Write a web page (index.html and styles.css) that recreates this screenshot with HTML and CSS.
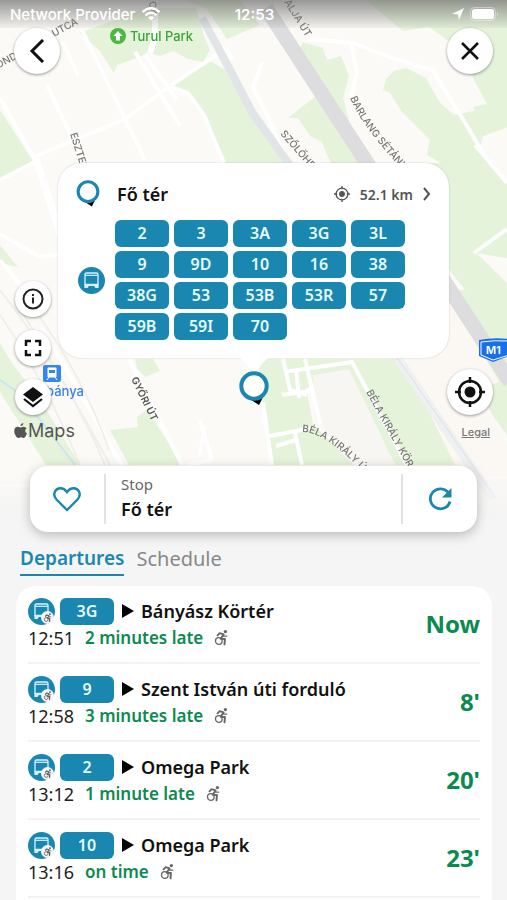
FILE: index.html
```html
<!DOCTYPE html>
<html lang="hu">

<head>
    <meta charset="UTF-8">
    <meta name="viewport" content="width=device-width, initial-scale=1.0">
    <title>Fő tér</title>
    <link rel="stylesheet" href="styles.css">
</head>

<body>
    <!-- shared icons -->
    <svg class="sprite" aria-hidden="true">
        <symbol id="bus" viewBox="0 0 27 27">
            <circle cx="13.5" cy="13.5" r="13.5" fill="#1a87b0" />
            <path d="M7 7.5Q7 6 8.500 6h10Q20 6 20 7.500V17.500H7z" fill="none" stroke="#d9f1fa" stroke-width="1.300" />
            <path d="M7 8.300h13" stroke="#d9f1fa" stroke-width="1.200" />
            <path d="M6.400 17h14.200v4h-3.200l-1.200-2h-5.400l-1.200 2H6.400z" fill="#d9f1fa" />
        </symbol>
        <symbol id="wheelchair" viewBox="0 0 16 18">
            <circle cx="13" cy="2.200" r="1.900" fill="currentColor" />
            <path d="M4 6.500L6.500 4l4.500 1.500-3.500 5 5 .300-.500 6" fill="none" stroke="currentColor" stroke-width="2.200" stroke-linejoin="round" stroke-linecap="round" />
            <path d="M11 7.500h3.500" fill="none" stroke="currentColor" stroke-width="1.500" stroke-linecap="round" />
            <circle cx="5.500" cy="13" r="3.800" fill="none" stroke="currentColor" stroke-width="1.500" />
        </symbol>
        <symbol id="bus-access" viewBox="0 0 27 27">
            <use href="#bus" />
            <circle cx="19.500" cy="19.500" r="6.500" fill="#f4f4f4" />
            <use href="#wheelchair" x="15.500" y="15" width="8" height="9" color="#555" />
        </symbol>
        <symbol id="pin" viewBox="0 0 30 36">
            <path d="M9 27l11 7 6-12z" fill="#000" />
            <circle cx="15" cy="15" r="12.700" fill="#fff" stroke="#1a87b0" stroke-width="4" />
        </symbol>
        <symbol id="target" viewBox="0 0 30 30">
            <circle cx="15" cy="15" r="11" fill="none" stroke="currentColor" stroke-width="2.500" />
            <circle cx="15" cy="15" r="5.500" fill="currentColor" />
            <path d="M15 0v6M15 24v6M0 15h6M24 15h6" stroke="currentColor" stroke-width="2.500" />
        </symbol>
    </svg>

    <main class="screen">
        <section class="map">
            <svg class="map-canvas" viewBox="0 0 507 520" preserveAspectRatio="xMidYMin slice" aria-hidden="true">
                <rect width="507" height="520" fill="#fbfaf6" />
                <g fill="#e5f3da">
                    <path d="M80 33L146 8h50l8 28 6 14-7 12-15-3-15-8-13 5-13-4-5 4-25 9-3 8-14-22z" />
                    <path d="M185 0h55l20 25-33 14-20-30z" />
                    <path d="M168 85l42-24 18 10 65 92h-68l-20-47-16-23z" />
                    <path d="M303 42l20 6 4 12 14-4 8 20-6 22 8 30 22 35h-15L300 48z" />
                    <path d="M366 0h141v112l-28 5-6-10 14-3-31-58-27-19-26 4z" />
                    <path d="M386 79l8-8 12-3 20 10 14 25 14 12 34-7 29-4v20l-34 12-4 15 12 14h-46l-18-10 3-15-28-28-12-19-7-3z" />
                    <path d="M288 118l28-22 53 70h-37l-10-24-12-6-12-18z" />
                    <path d="M0 110l34 53-34 18z" />
                    <path d="M0 245l18 22-18-4z" />
                    <path d="M430 163h24l53 75v20l-31-5 31 30v60l-60-76z" />
                    <path d="M452 163h35l20 20v55l-31 16z" />
                    <path d="M449 290h58v145l-12-16-18-30z" />
                    <path d="M0 343l12 20 30 40 38 62H46L0 392z" />
                    <path d="M135 359h18l7 12-15 6-8-9z" />
                    <path d="M110 430l28-3-1-10 10-7 36 55h-54z" />
                    <path d="M262 359h136l68 106h-70l-50-82-40 5 7 36 41 41H272l-5-40-12-40z" />
                </g>
                <path d="M449 290l50 92-22 8 35 65v65h-30L405 363z" fill="#fbf8f4" />
                <path d="M313 375l36-6 46 96h-36l-44-46z" fill="#f8f6f2" />
                <!-- streets -->
                <g fill="none" stroke="#fff" stroke-width="4">
                    <path d="M36 156L125 119l45-33 55-37 8 10M82 30l63 130M47 85l32 68M63 42l15 34M0 98l35 62 30 95M135 52l45 74M145 55l32 45M168 86l20 7 16 22 20 48" />
                    <path d="M307 39l46 4 45 17 35 10 9 16 22 35 22 37M351 44l6 28-6 25M262 62l-9 25 20 40 14 36" />
                    <path d="M0 180l38-20 30 92-28 5-40-23M474 253l33-24M0 260l40 50M475 145l32 38" />
                    <path d="M129 359l53 106M42 328l80 137M200 420l12 40-25 5M205 425l-5 30" />
                    <path d="M283 359l7 31 17 5M305 359l15 65M284 372l68-10 55 103M296 370l3 28M282 395l28-4M263 402l9 63M270 436l42-8M295 433l7 32M276 446l20-6" />
                </g>
                <path d="M155 0v38l-5 15" stroke="#fff" stroke-width="6" fill="none" />
                <path d="M202 18q20 36 51 96l36 50" fill="none" stroke="#e2e5e7" stroke-width="8" />
                <path d="M398 359l95 140" fill="none" stroke="#eef0f1" stroke-width="9" />
                <path d="M391 349l105 150" fill="none" stroke="#dde1e4" stroke-width="1" />
                <path d="M266 8L510 382" fill="none" stroke="#dddddf" stroke-width="15" />
                <path d="M0 380l20 14 55 71" fill="none" stroke="#c8e7f5" stroke-width="2" />
                <g fill="none" stroke="#f2efea" stroke-width="2">
                    <path d="M0 315q45 65 80 150M18 305q60 100 92 160M35 310q50 70 74 140M0 290q70 90 105 175" />
                </g>
                <!-- street names -->
                <g class="street">
                    <text transform="translate(-10 73) rotate(-28)">MOND</text>
                    <text transform="translate(54 37) rotate(-28)">UTCA</text>
                    <text transform="translate(143 -10) rotate(68)">UTCA</text>
                    <text transform="translate(284 2) rotate(58)">ALJA ÚT</text>
                    <text transform="translate(70 134) rotate(72)">ESZTERG</text>
                    <text transform="translate(280 134) rotate(49)">SZŐLŐHEGY</text>
                    <text transform="translate(131 379) rotate(64)" class="street-main">GYŐRI ÚT</text>
                    <path id="barlang" d="M350 98q14 33 66 86" fill="none" />
                    <text><textPath href="#barlang">BARLANG SÉTÁNY</textPath></text>
                    <path id="bela" d="M302 432q24 0 64 43" fill="none" />
                    <text><textPath href="#bela">BÉLA KIRÁLY Ú</textPath></text>
                    <text transform="translate(366 392) rotate(61)">BÉLA KIRÁLY KÖR</text>
                </g>
                <!-- points of interest -->
                <circle cx="118" cy="36" r="8" fill="#4ab840" />
                <path d="M118 31l4.500 5H120v4.500h-4V36h-2.500z" fill="#fff" />
                <text x="130" y="41" class="poi poi-park">Turul Park</text>
                <rect x="43" y="365" width="18" height="17" rx="2" fill="#3587ee" />
                <path d="M48 368h8v9h-8zM49 377l-2 3M55 377l2 3" fill="#fff" stroke="#fff" stroke-width="1" />
                <path d="M49 370h6v3h-6z" fill="#3587ee" />
                <text x="46" y="396" class="poi poi-station">bánya</text>
                <path d="M479 340q15-3 30-1v17l-16 6-14-6z" fill="#1670ee" />
                <path d="M481 342q13-2 28-1v14l-16 5-12-5z" fill="none" stroke="#fff" stroke-width="1" />
                <text x="486" y="354" class="shield">M1</text>
            </svg>

            <header class="status-bar">
                <div class="carrier">
                    <span>Network Provider</span>
                    <svg width="20" height="14" viewBox="0 0 20 14" aria-hidden="true">
                        <path d="M1.500 5q8.500-7.500 17 0M4.500 8.300q5.500-5 11 0" fill="none" stroke="#fff" stroke-width="2.500" />
                        <path d="M10 13.500L7 10.500q3-2.500 6 0z" fill="#fff" />
                    </svg>
                </div>
                <time>12:53</time>
                <div class="indicators">
                    <svg width="12" height="12" viewBox="0 0 12 12" aria-hidden="true">
                        <path d="M0 6L12 0 7 12 6 6.500z" fill="#fff" />
                    </svg>
                    <svg width="29" height="14" viewBox="0 0 29 14" aria-hidden="true">
                        <rect x=".500" y=".500" width="25" height="13" rx="4" fill="none" stroke="#fff" stroke-opacity=".4" />
                        <rect x="2" y="2" width="22" height="10" rx="2.500" fill="#fff" />
                        <path d="M27 5v4q2-2 0-4z" fill="#fff" fill-opacity=".5" />
                    </svg>
                </div>
            </header>

            <nav class="top-nav">
                <button class="round" aria-label="Back">
                    <svg width="16" height="24" viewBox="0 0 16 24"><path d="M14 1L3 12l11 11" fill="none" stroke="#111" stroke-width="3" /></svg>
                </button>
                <button class="round" aria-label="Close">
                    <svg width="18" height="18" viewBox="0 0 18 18"><path d="M1 1l16 16M17 1L1 17" stroke="#111" stroke-width="2.500" /></svg>
                </button>
            </nav>

            <article class="callout">
                <header class="callout-head">
                    <svg width="24" height="28"><use href="#pin" /></svg>
                    <h2>Fő tér</h2>
                    <a class="distance" href="#stop">
                        <svg width="16" height="16"><use href="#target" /></svg>
                        52.1 km
                        <svg width="8" height="14" viewBox="0 0 8 14"><path d="M1 1l5 6-5 6" fill="none" stroke="#555" stroke-width="2" /></svg>
                    </a>
                </header>
                <div class="callout-body">
                    <svg width="27" height="27"><use href="#bus" /></svg>
                    <ul class="lines">
                        <li class="line">2</li>
                        <li class="line">3</li>
                        <li class="line">3A</li>
                        <li class="line">3G</li>
                        <li class="line">3L</li>
                        <li class="line">9</li>
                        <li class="line">9D</li>
                        <li class="line">10</li>
                        <li class="line">16</li>
                        <li class="line">38</li>
                        <li class="line">38G</li>
                        <li class="line">53</li>
                        <li class="line">53B</li>
                        <li class="line">53R</li>
                        <li class="line">57</li>
                        <li class="line">59B</li>
                        <li class="line">59I</li>
                        <li class="line">70</li>
                    </ul>
                </div>
                <svg class="callout-tip" width="28" height="14" viewBox="0 0 28 14"><path d="M0 0h28L14 14z" fill="#fff" /></svg>
            </article>
            <svg class="map-pin" width="30" height="36"><use href="#pin" /></svg>

            <div class="tools">
                <button class="round small" aria-label="Information">
                    <svg width="22" height="22" viewBox="0 0 22 22"><circle cx="11" cy="11" r="9.500" fill="none" stroke="#222" stroke-width="2" /><path d="M11 9.500v6M11 6v2" stroke="#222" stroke-width="2" /></svg>
                </button>
                <button class="round small" aria-label="Fullscreen">
                    <svg width="18" height="18" viewBox="0 0 18 18"><path d="M2 7V2h5M11 2h5v5M16 11v5h-5M7 16H2v-5" fill="none" stroke="#111" stroke-width="2.500" /></svg>
                </button>
                <button class="round small" aria-label="Layers">
                    <svg width="20" height="22" viewBox="0 0 20 22"><path d="M10 1L0 8.500 10 16l10-7.500z" fill="#111" /><path d="M1 13l9 7 9-7" fill="none" stroke="#111" stroke-width="2.200" /></svg>
                </button>
            </div>
            <button class="round locate" aria-label="My location">
                <svg width="30" height="30"><use href="#target" /></svg>
            </button>
            <div class="brand">
                <svg width="13" height="15" viewBox="0 0 13 15" aria-hidden="true"><path d="M9.500 3.800q2 0 3 1.500-3 2.500.500 5.200-2 4.500-3.500 4.500L7 14.300 4.500 15Q2.500 15 .600 10.500-.800 4 4 3.800l2.700.800zM6.500 3.300Q6.500.500 9.300 0 9.500 2.800 6.500 3.300z" fill="#555" /></svg>
                <span>Maps</span>
            </div>
            <a class="legal" href="#legal">Legal</a>
        </section>

        <section class="stop" id="stop">
            <button class="stop-action" aria-label="Add to favourites">
                <svg width="28" height="26" viewBox="0 0 28 26"><path d="M14 24L3.500 13.500Q0 9.500 2 5.500C4 1.500 10 .500 14 6 18 .500 24 1.500 26 5.500q2 4-1.500 8z" fill="none" stroke="#1a87b0" stroke-width="2.400" /></svg>
            </button>
            <div class="stop-name">
                <span>Stop</span>
                <h1>Fő tér</h1>
            </div>
            <button class="stop-action" aria-label="Refresh">
                <svg width="24" height="24" viewBox="0 0 24 24"><path d="M20.500 6A10 10 0 1 0 22 14.500" fill="none" stroke="#1a87b0" stroke-width="2.800" /><path d="M23.500 1v9.500H14z" fill="#1a87b0" /></svg>
            </button>
        </section>

        <nav class="tabs">
            <a class="active" href="#departures">Departures</a>
            <a href="#schedule">Schedule</a>
        </nav>

        <ul class="departures" id="departures">
            <li class="departure">
                <div>
                    <div class="route">
                        <svg width="27" height="27"><use href="#bus-access" /></svg>
                        <span class="line">3G</span>
                        <svg class="arrow" width="12" height="14" viewBox="0 0 12 14"><path d="M0 0l12 7-12 7z" /></svg>
                        <b>Bányász Körtér</b>
                    </div>
                    <div class="timing">
                        <time>12:51</time>
                        <span class="delay">2 minutes late</span>
                        <svg width="14" height="17"><use href="#wheelchair" /></svg>
                    </div>
                </div>
                <strong>Now</strong>
            </li>
            <li class="departure">
                <div>
                    <div class="route">
                        <svg width="27" height="27"><use href="#bus-access" /></svg>
                        <span class="line">9</span>
                        <svg class="arrow" width="12" height="14" viewBox="0 0 12 14"><path d="M0 0l12 7-12 7z" /></svg>
                        <b>Szent István úti forduló</b>
                    </div>
                    <div class="timing">
                        <time>12:58</time>
                        <span class="delay">3 minutes late</span>
                        <svg width="14" height="17"><use href="#wheelchair" /></svg>
                    </div>
                </div>
                <strong>8'</strong>
            </li>
            <li class="departure">
                <div>
                    <div class="route">
                        <svg width="27" height="27"><use href="#bus-access" /></svg>
                        <span class="line">2</span>
                        <svg class="arrow" width="12" height="14" viewBox="0 0 12 14"><path d="M0 0l12 7-12 7z" /></svg>
                        <b>Omega Park</b>
                    </div>
                    <div class="timing">
                        <time>13:12</time>
                        <span class="delay">1 minute late</span>
                        <svg width="14" height="17"><use href="#wheelchair" /></svg>
                    </div>
                </div>
                <strong>20'</strong>
            </li>
            <li class="departure">
                <div>
                    <div class="route">
                        <svg width="27" height="27"><use href="#bus-access" /></svg>
                        <span class="line">10</span>
                        <svg class="arrow" width="12" height="14" viewBox="0 0 12 14"><path d="M0 0l12 7-12 7z" /></svg>
                        <b>Omega Park</b>
                    </div>
                    <div class="timing">
                        <time>13:16</time>
                        <span class="delay">on time</span>
                        <svg width="14" height="17"><use href="#wheelchair" /></svg>
                    </div>
                </div>
                <strong>23'</strong>
            </li>
        </ul>
    </main>
</body>

</html>
```
FILE: styles.css
```css
* {
    box-sizing: border-box;
    margin: 0;
    padding: 0;
}

body {
    font-family: "Noto Sans", sans-serif;
    font-size: 18px;
    color: #111;
    background-color: #f5f5f5;
}

button {
    border: none;
    background: none;
    cursor: pointer;
}

ul {
    list-style: none;
}

a {
    text-decoration: none;
}

svg {
    display: block;
    flex-shrink: 0;
}

.sprite {
    position: absolute;
    width: 0;
    height: 0;
}

.screen {
    min-height: 100vh;
    display: flex;
    flex-direction: column;
}

/* Map */
.map {
    position: relative;
    padding-bottom: 59px;
}

.map-canvas {
    position: absolute;
    top: 0;
    left: 0;
    width: 100%;
    height: 520px;
    -webkit-mask-image: linear-gradient(#000 470px, transparent 516px);
    mask-image: linear-gradient(#000 470px, transparent 516px);
}

.street {
    font-family: Inter, sans-serif;
    font-size: 10px;
    font-weight: 500;
    fill: #777;
}

.street-main {
    font-weight: 600;
    fill: #555;
}

.poi {
    font-family: Inter, sans-serif;
    font-size: 13px;
    font-weight: 500;
}

.poi-park {
    fill: #3da338;
}

.poi-station {
    fill: #3c82e6;
}

.shield {
    font-family: Inter, sans-serif;
    font-size: 11px;
    font-weight: 700;
    fill: #fff;
}

.status-bar {
    position: relative;
    display: grid;
    grid-template-columns: 1fr auto 1fr;
    align-items: center;
    height: 28px;
    padding: 0 8px 0 10px;
    font-family: Inter, sans-serif;
    font-size: 15px;
    font-weight: 500;
    color: #fff;
    background: linear-gradient(rgba(110, 110, 110, .7), rgba(150, 150, 150, .1));
}

.status-bar time {
    font-weight: 600;
}

.carrier,
.indicators {
    display: flex;
    align-items: center;
    gap: 6px;
}

.indicators {
    justify-content: flex-end;
}

.top-nav {
    position: relative;
    display: flex;
    justify-content: space-between;
    padding: 0 14px;
}

.round {
    display: flex;
    align-items: center;
    justify-content: center;
    width: 46px;
    height: 46px;
    border-radius: 50%;
    color: #111;
    background-color: #fff;
    box-shadow: 0 1px 3px rgba(0, 0, 0, .4);
}

.round.small {
    width: 36px;
    height: 36px;
}

.callout {
    position: relative;
    margin: 89px 58px 0;
    padding: 15px 18px 18px;
    border-radius: 24px;
    background-color: #fff;
    box-shadow: 0 0 2px rgba(0, 0, 0, .2);
}

.callout-head {
    display: flex;
    align-items: center;
    height: 32px;
    margin-bottom: 10px;
}

.callout-head h2 {
    flex: 1;
    margin-left: 17px;
    font-size: 18px;
    font-weight: 600;
}

.distance {
    display: flex;
    align-items: center;
    gap: 10px;
    font-size: 14px;
    font-weight: 600;
    color: #555;
}

.callout-body {
    display: flex;
    align-items: center;
    gap: 10px;
    padding-left: 2px;
}

.lines {
    display: flex;
    flex-wrap: wrap;
    gap: 4px 5px;
}

.line {
    width: 54px;
    height: 27px;
    border-radius: 6px;
    font-size: 16px;
    font-weight: 600;
    line-height: 27px;
    text-align: center;
    color: #e6fbff;
    background-color: #1a87b0;
}

.callout-tip {
    position: absolute;
    top: 100%;
    left: 50%;
    transform: translateX(-50%);
}

.map-pin {
    position: relative;
    margin: 13px auto 0;
}

.tools {
    position: absolute;
    top: 281px;
    left: 15px;
    display: flex;
    flex-direction: column;
    gap: 13px;
}

.locate {
    position: absolute;
    top: 369px;
    right: 14px;
}

.brand {
    position: absolute;
    top: 420px;
    left: 14px;
    display: flex;
    align-items: center;
    gap: 1px;
    font-family: Inter, sans-serif;
    font-size: 18px;
    color: #555;
}

.legal {
    position: absolute;
    top: 425px;
    right: 17px;
    font-family: Inter, sans-serif;
    font-size: 11px;
    font-weight: 500;
    text-decoration: underline;
    color: #777;
}

/* Stop */
.stop {
    position: relative;
    display: flex;
    align-items: center;
    height: 66px;
    margin: 0 30px;
    border-radius: 18px;
    background-color: #fff;
    box-shadow: 0 3px 12px rgba(0, 0, 0, .25);
}

.stop-action {
    display: flex;
    align-items: center;
    justify-content: center;
    width: 74px;
    height: 66px;
}

.stop-name {
    flex: 1;
    padding: 0 15px;
    border-left: 2px solid #e2e2e2;
    border-right: 2px solid #e2e2e2;
}

.stop-name span {
    display: block;
    font-size: 15px;
    line-height: 20px;
    color: #666;
}

.stop-name h1 {
    font-size: 18px;
    font-weight: 600;
    line-height: 30px;
}

.tabs {
    display: flex;
    gap: 12px;
    padding: 11px 20px 10px;
    font-size: 20px;
    line-height: 31px;
}

.tabs a {
    border-bottom: 2px solid transparent;
    color: #888;
}

.tabs .active {
    border-color: #1a87b0;
    font-size: 19px;
    font-weight: 600;
    color: #1a87b0;
}

/* Departures */
.departures {
    flex: 1;
    margin: 0 15px 0 16px;
    padding: 0 12px;
    border-radius: 20px 20px 0 0;
    background-color: #fff;
}

.departure {
    display: flex;
    align-items: center;
    justify-content: space-between;
    height: 78px;
    border-bottom: 2px solid #f3f3f3;
}

.route {
    display: flex;
    align-items: center;
    gap: 5px;
}

.route b {
    font-weight: 600;
    line-height: 27px;
}

.arrow {
    margin: 0 2px 0 3px;
}

.timing {
    display: flex;
    align-items: center;
    gap: 11px;
    line-height: 26px;
    color: #666;
}

.timing time {
    color: #222;
}

.delay {
    font-size: 17px;
    font-weight: 600;
    color: #0b8a50;
}

.departure strong {
    font-size: 24px;
    font-weight: 700;
    line-height: 34px;
    color: #0b8a50;
}
```
